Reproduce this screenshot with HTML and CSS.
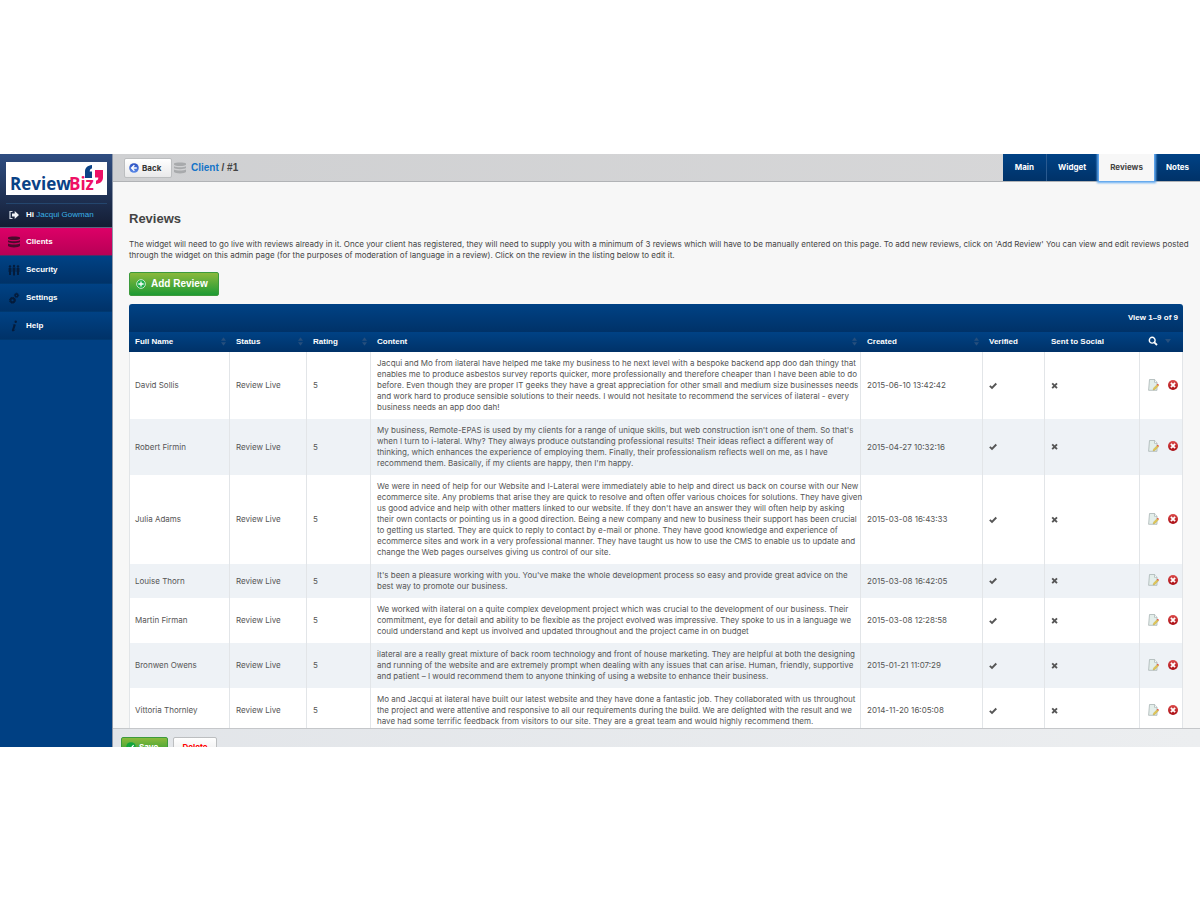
FILE: index.html
```html
<!DOCTYPE html>
<html lang="en">
<head>
<meta charset="utf-8">
<title>ReviewBiz – Reviews</title>
<link rel="stylesheet" href="styles.css">
</head>
<body>
<svg class="defs" aria-hidden="true">
  <defs>
    <linearGradient id="red" x1="0" y1="0" x2="0" y2="1"><stop offset="0" stop-color="#dc4b4b"/><stop offset="1" stop-color="#a80d14"/></linearGradient>
    <linearGradient id="blue" x1="0" y1="0" x2="0" y2="1"><stop offset="0" stop-color="#2b4fc0"/><stop offset="1" stop-color="#5b8ae8"/></linearGradient>
    <symbol id="db" viewBox="0 0 12 12"><path d="M0 1.600C1.200.2 10.800.2 12 1.600v1.200C10.800 4.400 1.200 4.400 0 2.800zM0 4.200c2 1.300 10 1.300 12 0v1.900c-1.200 1.500-10.800 1.500-12 0zM0 7.500c2 1.300 10 1.300 12 0v2.600c-1.200 1.800-10.800 1.800-12 0z"/></symbol>
    <symbol id="sort" viewBox="0 0 6 10"><path d="M3 0l3 4H0zM0 6h6l-3 4z"/></symbol>
    <symbol id="check" viewBox="0 0 8 8"><path d="M.8 3.900l2.200 2L7.300 1.500" fill="none" stroke="#555" stroke-width="1.900"/></symbol>
    <symbol id="cross" viewBox="0 0 8 8"><path d="M1.200 1.400l4.800 4.800M6 1.400L1.200 6.200" fill="none" stroke="#555" stroke-width="1.900"/></symbol>
    <symbol id="edit" viewBox="0 0 11 12"><path d="M1.500.5h5.200l2.300 2.800v8H.6z" fill="#e3eeea" stroke="#a9b5b5" stroke-width=".8"/><path d="M6.500.5v2.800H9" fill="#fff" stroke="#9aa6a6" stroke-width=".6"/><path d="M5 11l.6-2 3.600-3.600 1.400 1.400L7 10.400z" fill="#e0c552" stroke="#b09b45" stroke-width=".3"/><path d="M8.900 5.600l.9-.9 1.200 1.200-.9.900z" fill="#e2483e"/></symbol>
    <symbol id="del" viewBox="0 0 10 10"><circle cx="5" cy="5" r="5" fill="url(#red)"/><path d="M2.900 2.900l4.200 4.200M7.100 2.900L2.900 7.100" stroke="#fff" stroke-width="1.800"/></symbol>
  </defs>
</svg>
<div class="app">
  <aside class="sidebar">
    <div class="brand">
      <a class="logo" href="#" aria-label="ReviewBiz">
        <svg viewBox="0 0 101 33">
          <text class="logo-text" x="4" y="28" fill="#0a4286">Review</text>
          <text class="logo-text" x="63" y="28" fill="#ee1166">Biz</text>
          <path d="M86 3v3.400c-1.600.3-2.300 1.300-2.300 3.100H86V16h-7V9.500C79 5.800 81.500 3.500 86 3z" fill="#0a4286"/>
          <path d="M89 8h8v7.500c0 3.800-2.600 6-7 6.500v-3.200c1.600-.5 2.300-1.500 2.300-3.300H89z" fill="#ee1166"/>
        </svg>
      </a>
      <p class="user">
        <svg class="icon" viewBox="0 0 12 12"><path d="M4.500 2.500H2v7h2.500" fill="none" stroke="#d5dce6" stroke-width="1.200"/><path d="M4 4.500h2.700V2L11 6 6.700 10V7.500H4z" fill="#eef1f6"/></svg>
        <span>Hi <a href="#">Jacqui Gowman</a></span>
      </p>
    </div>
    <nav class="menu">
      <a class="menu-item active" href="#"><svg class="icon" viewBox="0 0 12 12"><use href="#db"/></svg>Clients</a>
      <a class="menu-item" href="#"><svg class="icon" viewBox="0 0 12 12"><circle cx="2" cy="2.500" r="1.200"/><circle cx="6" cy="2" r="1.200"/><circle cx="10" cy="2.500" r="1.200"/><path d="M.6 4h2.800v4H3v3H1V8H.6zM4.600 3.500h2.800v4.200H7v3.700H5V7.700h-.4zM8.600 4h2.800v4H11v3H9V8h-.4z"/></svg>Security</a>
      <a class="menu-item" href="#"><svg class="icon" viewBox="0 0 12 12"><g fill="none" stroke="#041c3c"><circle cx="4.500" cy="8.300" r="2" stroke-width="1.900"/><circle cx="4.500" cy="8.300" r="3" stroke-width="1" stroke-dasharray="1.300 1.056"/><circle cx="8.500" cy="3.300" r="1.400" stroke-width="1.500"/><circle cx="8.500" cy="3.300" r="2.200" stroke-width=".8" stroke-dasharray="1 .728"/></g></svg>Settings</a>
      <a class="menu-item" href="#"><svg class="icon" viewBox="0 0 12 12"><circle cx="7.700" cy="1.700" r="1.200"/><path d="M4.200 5.200c1.200-1.200 3.900-1.600 3.400.2L6.200 9.600c-.1.700.4.600 1.200 0-.9 1.900-4 2.700-3.400.2l1.400-4c.1-.8-.4-.9-1.200-.6z"/></svg>Help</a>
    </nav>
  </aside>
  <main class="main">
    <header class="topbar">
      <button class="btn btn-plain back" type="button"><svg class="round" viewBox="0 0 10 10"><circle cx="5" cy="5" r="4.800" fill="url(#blue)"/><path d="M5.400 2.200L2.600 5l2.800 2.800M2.800 5h5" fill="none" stroke="#fff" stroke-width="1.400"/></svg>Back</button>
      <svg class="icon crumb-icon" viewBox="0 0 12 12"><use href="#db"/></svg>
      <p class="crumbs"><a href="#">Client</a> / #1</p>
      <nav class="tabs">
        <a class="tab" href="#">Main</a>
        <a class="tab" href="#">Widget</a>
        <a class="tab current" href="#" aria-current="page">Reviews</a>
        <a class="tab" href="#">Notes</a>
      </nav>
    </header>
    <section class="content">
      <h1>Reviews</h1>
      <p class="intro">The widget will need to go live with reviews already in it. Once your client has registered, they will need to supply you with a minimum of 3 reviews which will have to be manually entered on this page. To add new reviews, click on 'Add Review' You can view and edit reviews posted<br>through the widget on this admin page (for the purposes of moderation of language in a review). Click on the review in the listing below to edit it.</p>
      <button class="btn btn-green add" type="button"><svg class="round" viewBox="0 0 10 10"><circle cx="5" cy="5" r="4.400" fill="#1fb04c" stroke="#d3ecd4" stroke-width=".9"/><path d="M5 2.400v5.200M2.400 5h5.200" stroke="#fff" stroke-width="1.300"/></svg>Add Review</button>
      <div class="grid">
        <div class="grid-bar">View 1–9 of 9</div>
        <table>
          <colgroup><col class="c-name"><col class="c-status"><col class="c-rating"><col><col class="c-created"><col class="c-verified"><col class="c-social"><col class="c-actions"></colgroup>
          <thead>
            <tr>
              <th><div class="head">Full Name<svg class="sort" viewBox="0 0 6 10"><use href="#sort"/></svg></div></th>
              <th><div class="head">Status<svg class="sort" viewBox="0 0 6 10"><use href="#sort"/></svg></div></th>
              <th><div class="head">Rating<svg class="sort" viewBox="0 0 6 10"><use href="#sort"/></svg></div></th>
              <th><div class="head">Content<svg class="sort" viewBox="0 0 6 10"><use href="#sort"/></svg></div></th>
              <th><div class="head">Created<svg class="sort" viewBox="0 0 6 10"><use href="#sort"/></svg></div></th>
              <th>Verified</th>
              <th>Sent to Social</th>
              <th><div class="tools"><svg class="round" viewBox="0 0 10 10"><circle cx="4.200" cy="4.200" r="2.900" fill="none" stroke="#fff" stroke-width="1.400"/><path d="M6.300 6.300l2.700 2.700" stroke="#fff" stroke-width="1.800"/></svg><svg class="caret" viewBox="0 0 6 4"><path d="M0 0h6L3 4z"/></svg></div></th>
            </tr>
          </thead>
          <tbody>
            <tr><td>David Sollis</td><td>Review Live</td><td>5</td><td class="text">Jacqui and Mo from ilateral have helped me take my business to he next level with a bespoke backend app doo dah thingy that<br>enables me to produce asbestos survey reports quicker, more professionally and therefore cheaper than I have been able to do<br>before. Even though they are proper IT geeks they have a great appreciation for other small and medium size businesses needs<br>and work hard to produce sensible solutions to their needs. I would not hesitate to recommend the services of ilateral - every<br>business needs an app doo dah!</td><td>2015-06-10 13:42:42</td><td><svg class="mark" viewBox="0 0 8 8"><use href="#check"/></svg></td><td><svg class="mark" viewBox="0 0 8 8"><use href="#cross"/></svg></td><td><div class="tools"><button class="tool" type="button" aria-label="Edit"><svg class="edit" viewBox="0 0 11 12"><use href="#edit"/></svg></button><button class="tool" type="button" aria-label="Delete"><svg class="round" viewBox="0 0 10 10"><use href="#del"/></svg></button></div></td></tr>
            <tr><td>Robert Firmin</td><td>Review Live</td><td>5</td><td class="text">My business, Remote-EPAS is used by my clients for a range of unique skills, but web construction isn't one of them. So that's<br>when I turn to i-lateral. Why? They always produce outstanding professional results! Their ideas reflect a different way of<br>thinking, which enhances the experience of employing them. Finally, their professionalism reflects well on me, as I have<br>recommend them. Basically, if my clients are happy, then I'm happy.</td><td>2015-04-27 10:32:16</td><td><svg class="mark" viewBox="0 0 8 8"><use href="#check"/></svg></td><td><svg class="mark" viewBox="0 0 8 8"><use href="#cross"/></svg></td><td><div class="tools"><button class="tool" type="button" aria-label="Edit"><svg class="edit" viewBox="0 0 11 12"><use href="#edit"/></svg></button><button class="tool" type="button" aria-label="Delete"><svg class="round" viewBox="0 0 10 10"><use href="#del"/></svg></button></div></td></tr>
            <tr><td>Julia Adams</td><td>Review Live</td><td>5</td><td class="text">We were in need of help for our Website and I-Lateral were immediately able to help and direct us back on course with our New<br>ecommerce site. Any problems that arise they are quick to resolve and often offer various choices for solutions. They have given<br>us good advice and help with other matters linked to our website. If they don't have an answer they will often help by asking<br>their own contacts or pointing us in a good direction. Being a new company and new to business their support has been crucial<br>to getting us started. They are quick to reply to contact by e-mail or phone. They have good knowledge and experience of<br>ecommerce sites and work in a very professional manner. They have taught us how to use the CMS to enable us to update and<br>change the Web pages ourselves giving us control of our site.</td><td>2015-03-08 16:43:33</td><td><svg class="mark" viewBox="0 0 8 8"><use href="#check"/></svg></td><td><svg class="mark" viewBox="0 0 8 8"><use href="#cross"/></svg></td><td><div class="tools"><button class="tool" type="button" aria-label="Edit"><svg class="edit" viewBox="0 0 11 12"><use href="#edit"/></svg></button><button class="tool" type="button" aria-label="Delete"><svg class="round" viewBox="0 0 10 10"><use href="#del"/></svg></button></div></td></tr>
            <tr><td>Louise Thorn</td><td>Review Live</td><td>5</td><td class="text">It's been a pleasure working with you. You've make the whole development process so easy and provide great advice on the<br>best way to promote our business.</td><td>2015-03-08 16:42:05</td><td><svg class="mark" viewBox="0 0 8 8"><use href="#check"/></svg></td><td><svg class="mark" viewBox="0 0 8 8"><use href="#cross"/></svg></td><td><div class="tools"><button class="tool" type="button" aria-label="Edit"><svg class="edit" viewBox="0 0 11 12"><use href="#edit"/></svg></button><button class="tool" type="button" aria-label="Delete"><svg class="round" viewBox="0 0 10 10"><use href="#del"/></svg></button></div></td></tr>
            <tr><td>Martin Firman</td><td>Review Live</td><td>5</td><td class="text">We worked with ilateral on a quite complex development project which was crucial to the development of our business. Their<br>commitment, eye for detail and ability to be flexible as the project evolved was impressive. They spoke to us in a language we<br>could understand and kept us involved and updated throughout and the project came in on budget</td><td>2015-03-08 12:28:58</td><td><svg class="mark" viewBox="0 0 8 8"><use href="#check"/></svg></td><td><svg class="mark" viewBox="0 0 8 8"><use href="#cross"/></svg></td><td><div class="tools"><button class="tool" type="button" aria-label="Edit"><svg class="edit" viewBox="0 0 11 12"><use href="#edit"/></svg></button><button class="tool" type="button" aria-label="Delete"><svg class="round" viewBox="0 0 10 10"><use href="#del"/></svg></button></div></td></tr>
            <tr><td>Bronwen Owens</td><td>Review Live</td><td>5</td><td class="text">ilateral are a really great mixture of back room technology and front of house marketing. They are helpful at both the designing<br>and running of the website and are extremely prompt when dealing with any issues that can arise. Human, friendly, supportive<br>and patient – I would recommend them to anyone thinking of using a website to enhance their business.</td><td>2015-01-21 11:07:29</td><td><svg class="mark" viewBox="0 0 8 8"><use href="#check"/></svg></td><td><svg class="mark" viewBox="0 0 8 8"><use href="#cross"/></svg></td><td><div class="tools"><button class="tool" type="button" aria-label="Edit"><svg class="edit" viewBox="0 0 11 12"><use href="#edit"/></svg></button><button class="tool" type="button" aria-label="Delete"><svg class="round" viewBox="0 0 10 10"><use href="#del"/></svg></button></div></td></tr>
            <tr><td>Vittoria Thornley</td><td>Review Live</td><td>5</td><td class="text">Mo and Jacqui at ilateral have built our latest website and they have done a fantastic job. They collaborated with us throughout<br>the project and were attentive and responsive to all our requirements during the build. We are delighted with the result and we<br>have had some terrific feedback from visitors to our site. They are a great team and would highly recommend them.</td><td>2014-11-20 16:05:08</td><td><svg class="mark" viewBox="0 0 8 8"><use href="#check"/></svg></td><td><svg class="mark" viewBox="0 0 8 8"><use href="#cross"/></svg></td><td><div class="tools"><button class="tool" type="button" aria-label="Edit"><svg class="edit" viewBox="0 0 11 12"><use href="#edit"/></svg></button><button class="tool" type="button" aria-label="Delete"><svg class="round" viewBox="0 0 10 10"><use href="#del"/></svg></button></div></td></tr>
          </tbody>
        </table>
      </div>
    </section>
    <footer class="actions">
      <button class="btn btn-green save" type="button"><svg class="round" viewBox="0 0 10 10"><circle cx="5" cy="5" r="4.800" fill="#12a53c"/><path d="M2.500 5.200l1.800 1.800L7.600 3.200" fill="none" stroke="#fff" stroke-width="1.200"/></svg>Save</button>
      <button class="btn btn-plain delete" type="button">Delete</button>
    </footer>
  </main>
</div>
</body>
</html>
```

FILE: styles.css
```css
* { box-sizing: border-box; }

body {
  margin: 0;
  padding: 154px 0 153px;
  height: 100vh;
  background: #fff;
  color: #444;
  font: 8px/11px Inter, "Liberation Sans", sans-serif;
}

h1, p { margin: 0; }
a { text-decoration: none; }
svg { flex: none; display: block; }

.defs { position: absolute; width: 0; height: 0; }
.icon { width: 12px; height: 12px; }
.round { width: 10px; height: 10px; }

.app {
  display: flex;
  height: 100%;
  overflow: hidden;
  background: #f7f7f7;
}

/* Sidebar */
.sidebar {
  flex: 0 0 113px;
  background: #004083;
  border-right: 1px solid #8d97a8;
  font: bold 8px/12px "Liberation Sans", sans-serif;
}

.brand {
  padding: 8px 5px 6px 6px;
  background: linear-gradient(#2f4e82, #141d33);
  border-bottom: 1px solid #5b6580;
}

.logo {
  display: block;
  background: #fff;
}

.logo-text { font: 700 17px "Open Sans", sans-serif; }

.user {
  display: flex;
  align-items: center;
  gap: 6px;
  margin-top: 8px;
  padding: 5px 2px 0;
  border-top: 1px solid #24466e;
  color: #fff;
  white-space: nowrap;
}

.user a { color: #3ab0e6; font-weight: normal; }

.menu-item {
  display: flex;
  align-items: center;
  gap: 6px;
  height: 28px;
  padding: 0 8px;
  background: linear-gradient(#004285, #003268);
  border-bottom: 1px solid #00386f;
  color: #fff;
  fill: #041c3c;
}

.menu-item.active {
  background: linear-gradient(#dd0067, #b80056);
  border-bottom-color: #4b2e67;
  fill: #4a0a2c;
}

/* Top bar */
.main {
  flex: 1;
  min-width: 0;
  display: flex;
  flex-direction: column;
}

.topbar {
  flex: 0 0 28px;
  display: flex;
  align-items: center;
  padding-left: 11px;
  background: linear-gradient(90deg, #cfd0d2, #d8d8d9);
  border-bottom: 1px solid #b1b3b6;
}

.btn {
  display: inline-flex;
  align-items: center;
  border: 1px solid;
  border-radius: 2px;
  font: bold 8px/12px Inter, sans-serif;
}

.btn-plain {
  background: linear-gradient(#fff, #e9e9ea);
  border-color: #bcbec0;
  color: #333;
}

.btn-green {
  background: linear-gradient(#8bb93c, #1d9a34);
  border-color: #3c9a3c;
  color: #fff;
}

.back { width: 48px; height: 20px; padding: 0 4px; gap: 3px; }
.crumb-icon { margin: 0 5px 0 2px; fill: #a8aaac; }

.crumbs { font: bold 10px/12px "Liberation Sans", sans-serif; }
.crumbs a { color: #1474c8; }

.tabs {
  display: flex;
  align-self: stretch;
  margin-left: auto;
  background: linear-gradient(#004285, #003268);
}

.tab {
  display: flex;
  align-items: center;
  padding: 0 11px;
  border-left: 1px solid #2a5a90;
  color: #fff;
  font-weight: bold;
}

.tab:last-child { border-left: 0; }
.tab:first-child { border-left: 0; padding: 0 12px; }

.tab.current {
  margin: 0 1px 0 2px;
  background: #f7f7f7;
  border-left: 0;
  color: #444;
  box-shadow: 0 0 2px 2px #62aaf2;
  clip-path: inset(0 -4px -4px -4px);
}

/* Content */
.content {
  flex: 1;
  min-height: 0;
  overflow: hidden;
  padding: 29px 17px 0 16px;
}

h1 { font: bold 13px/16px "Liberation Sans", sans-serif; }
.intro { margin-top: 12px; white-space: nowrap; }

.add {
  width: 90px;
  height: 24px;
  margin: 11px 0 8px;
  padding: 0 6px;
  gap: 5px;
  font: bold 10px/12px "Liberation Sans", sans-serif;
}

.grid-bar {
  height: 28px;
  padding: 8px 5px;
  background: linear-gradient(#004285, #003268);
  border-radius: 3px 3px 0 0;
  color: #fff;
  font: bold 8px/11px "Liberation Sans", sans-serif;
  text-align: right;
}

table {
  width: 100%;
  border-collapse: separate;
  border-spacing: 0;
  table-layout: fixed;
}

.c-name { width: 101px; }
.c-status { width: 77px; }
.c-rating { width: 64px; }
.c-created { width: 122px; }
.c-verified { width: 62px; }
.c-social { width: 95px; }
.c-actions { width: 43px; }

thead { background: linear-gradient(#004285, #003268); }

th {
  height: 20px;
  padding: 0 0 2px 6px;
  color: #fff;
  font: bold 8px/11px "Liberation Sans", sans-serif;
  text-align: left;
}

.head {
  display: flex;
  align-items: center;
  justify-content: space-between;
  padding-right: 4px;
}

.sort { width: 5px; height: 9px; fill: #264f7d; }
.caret { width: 6px; height: 4px; fill: #264f7d; }

td {
  padding: 6px 0 6px 6px;
  background: #fff;
  border-right: 1px solid #e2e5e8;
  color: #555;
  white-space: nowrap;
}

td:first-child { border-left: 1px solid #e2e5e8; padding-left: 5px; }
tbody tr:nth-child(even) td { background: #eef2f6; }

.mark { width: 8px; height: 8px; }

.tools {
  display: flex;
  align-items: center;
  justify-content: space-between;
  padding: 0 4px 2px 2px;
}

th .tools { padding: 0 12px 0 2px; }

.tool { padding: 0; border: 0; background: none; }
.edit { width: 11px; height: 12px; }

/* Bottom actions */
.actions {
  flex: 0 0 19px;
  display: flex;
  align-items: flex-start;
  gap: 5px;
  padding: 8px 8px 0;
  background: linear-gradient(90deg, #e2e5e9, #eceef0);
  border-top: 1px solid #c5c7ca;
  overflow: hidden;
}

.actions .btn { flex: none; height: 20px; }
.save { width: 47px; padding: 0 4px; gap: 3px; }
.delete { width: 44px; padding: 0; justify-content: center; }
.actions .delete { color: #f00; }
```
